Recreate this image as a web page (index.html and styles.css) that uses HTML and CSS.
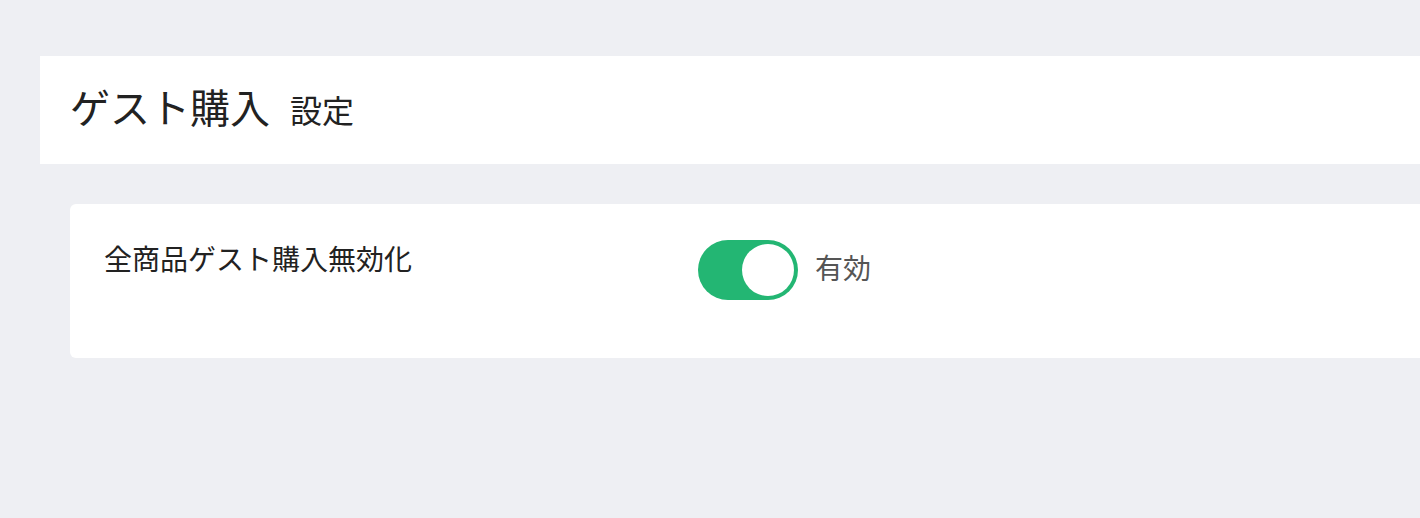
FILE: index.html
```html
<!DOCTYPE html>
<html lang="ja">
<head>
<meta charset="utf-8">
<link rel="stylesheet" href="styles.css">
</head>
<body>
<div class="page">
  <header class="header">
    <h1 class="title">ゲスト購入</h1>
    <span class="subtitle">設定</span>
  </header>
  <section class="card">
    <div class="row">
      <div class="label">全商品ゲスト購入無効化</div>
      <div class="control">
        <span class="toggle on"><span class="knob"></span></span>
        <span class="state">有効</span>
      </div>
    </div>
  </section>
</div>
</body>
</html>
```
FILE: styles.css
```css
html, body {
  margin: 0;
  padding: 0;
  background: #eeeff3;
  font-family: "Noto Sans CJK JP", "Noto Sans", sans-serif;
  color: #222;
}
.page {
  padding: 56px 0 0 40px;
}
.header {
  background: #fff;
  height: 108px;
  box-sizing: border-box;
  display: flex;
  align-items: baseline;
  padding: 20px 0 0 30px;
}
.title {
  margin: 0;
  font-size: 40px;
  font-weight: 400;
  line-height: 60px;
  color: #222;
}
.subtitle {
  font-size: 32px;
  margin-left: 20px;
  color: #222;
}
.card {
  margin: 40px 0 0 30px;
  background: #fff;
  border-radius: 6px 0 0 6px;
  height: 154px;
  box-sizing: border-box;
  padding: 36px 0 0 34px;
}
.row {
  display: grid;
  grid-template-columns: 594px auto;
  align-items: start;
}
.label {
  font-size: 28px;
  line-height: 42px;
  margin-top: -3px;
  color: #222;
}
.control {
  display: flex;
  align-items: center;
  gap: 17px;
}
.toggle {
  width: 100px;
  height: 60px;
  border-radius: 30px;
  background: #23b673;
  box-sizing: border-box;
  padding: 4px;
  display: flex;
  justify-content: flex-end;
}
.knob {
  width: 52px;
  height: 52px;
  border-radius: 50%;
  background: #fff;
}
.state {
  font-size: 28px;
  line-height: 42px;
  margin-bottom: 6px;
  color: #555;
}
```
